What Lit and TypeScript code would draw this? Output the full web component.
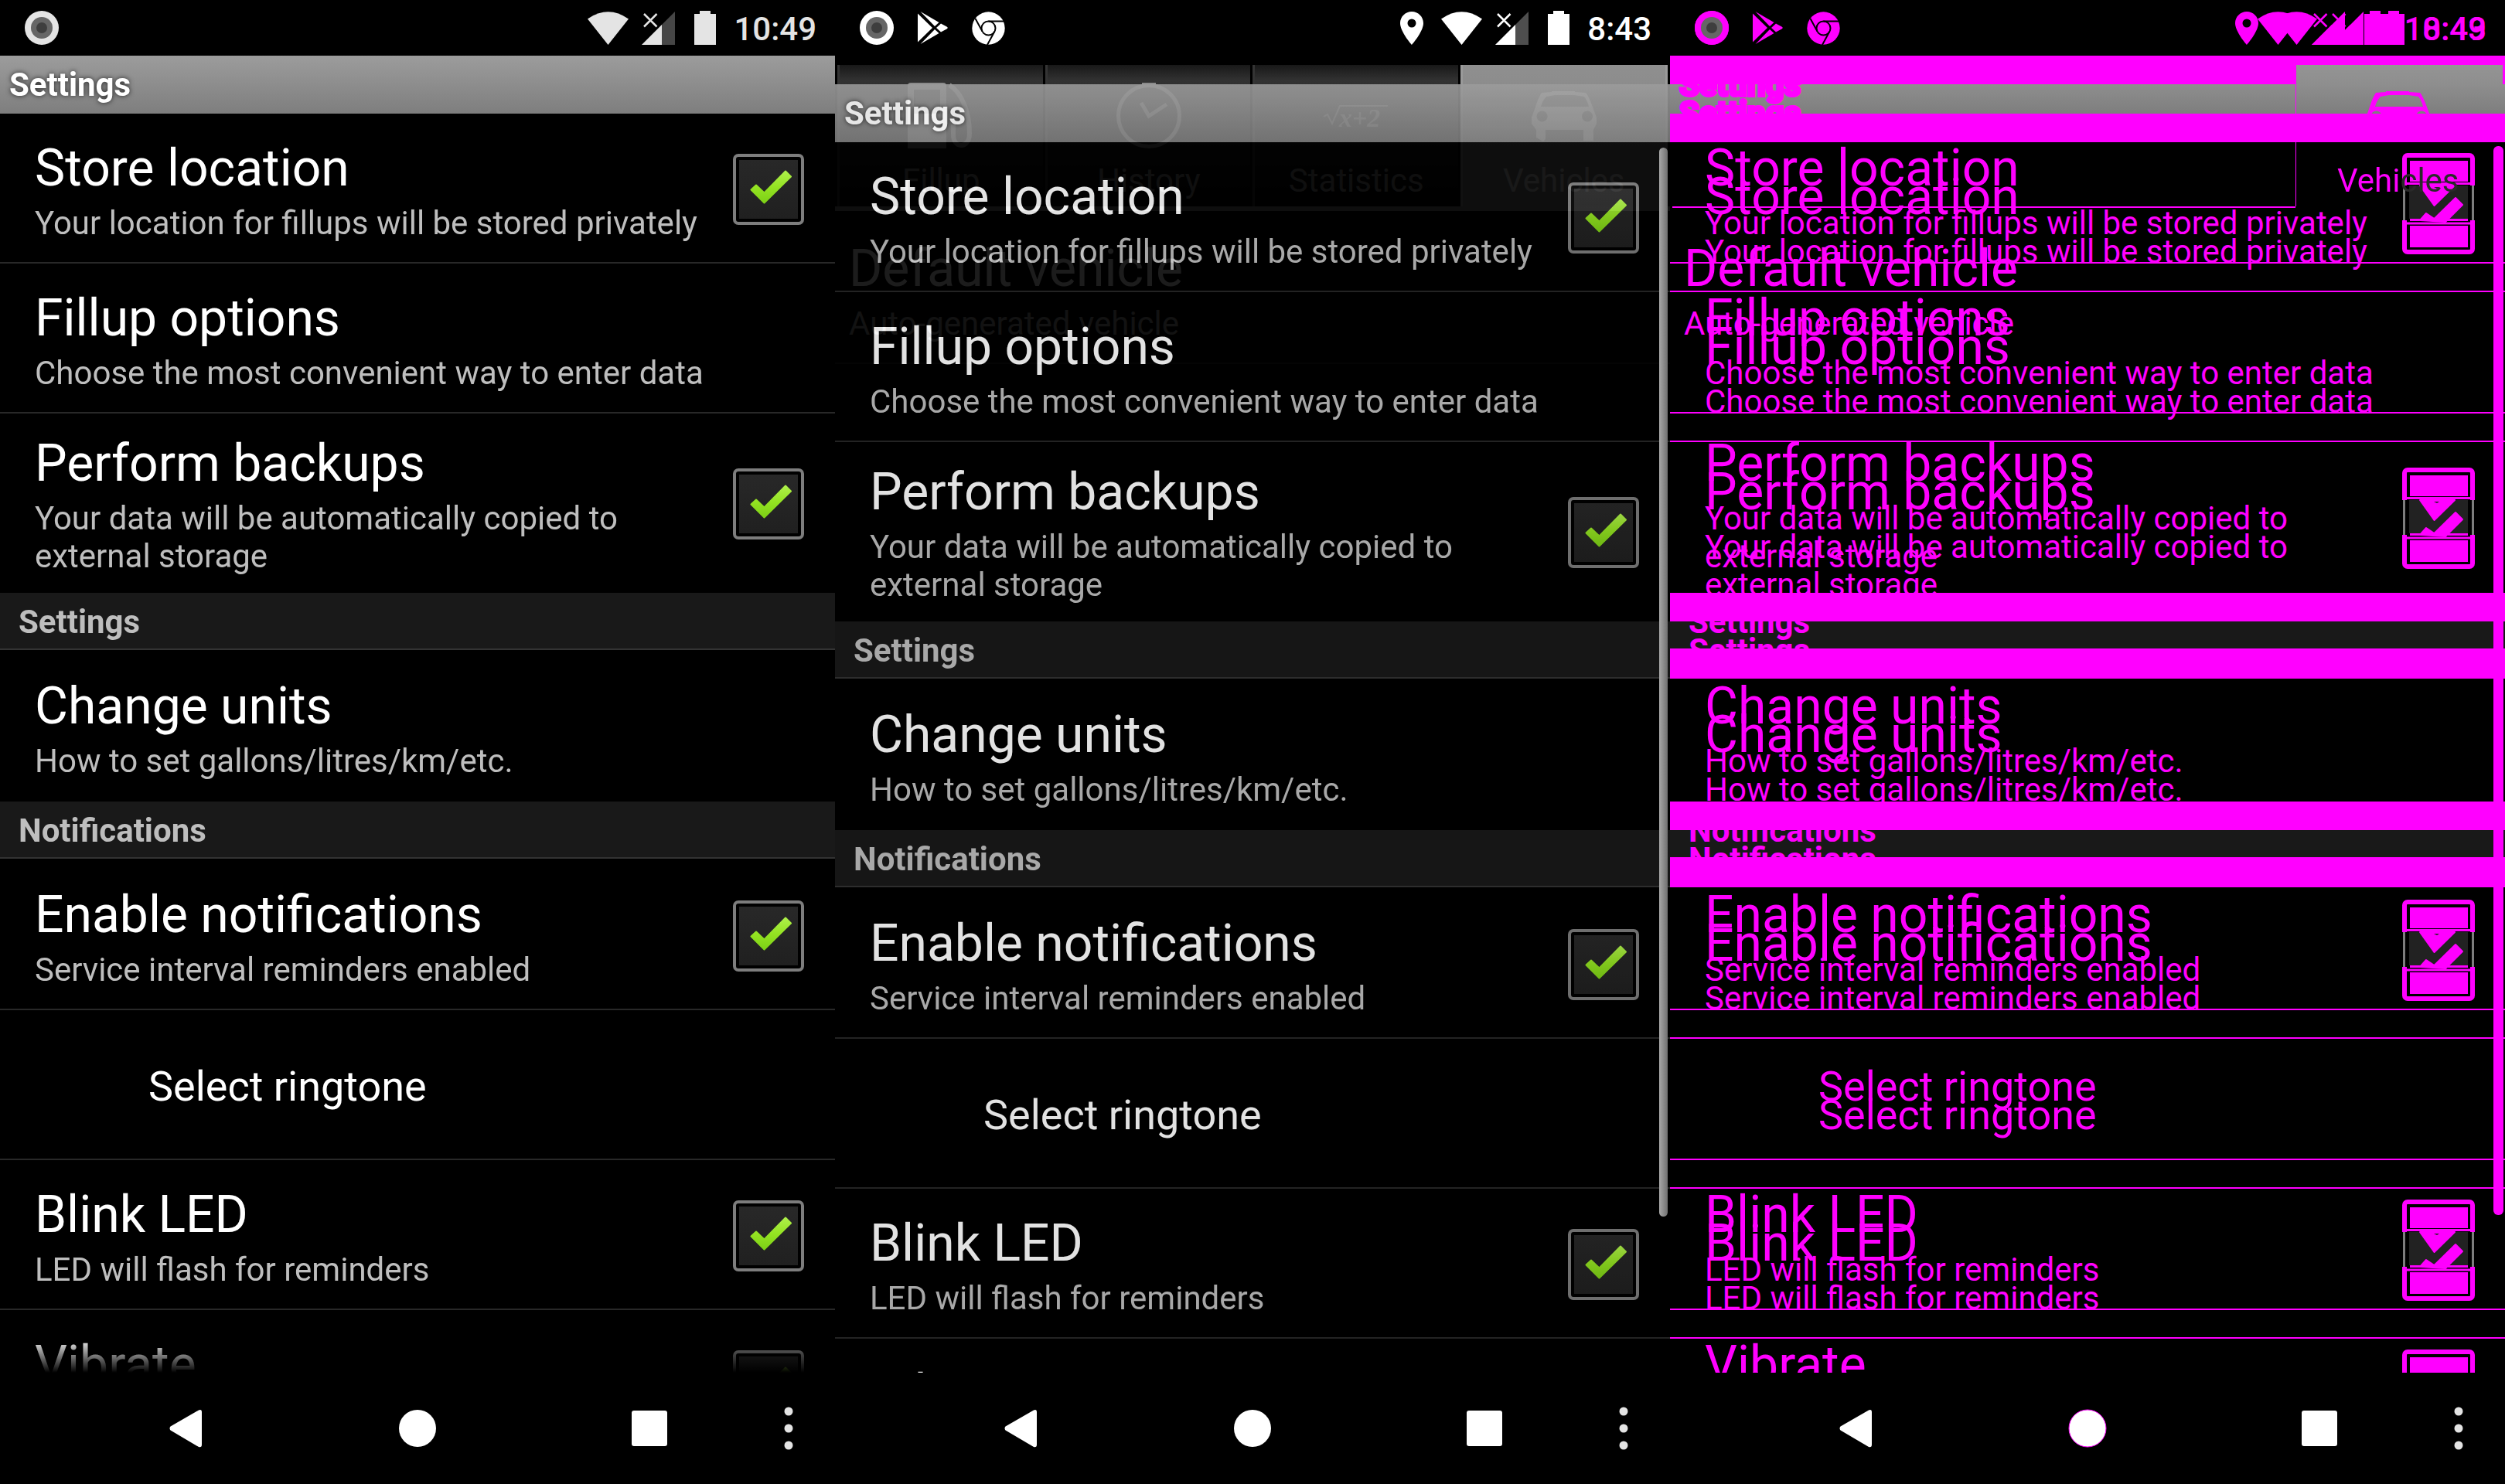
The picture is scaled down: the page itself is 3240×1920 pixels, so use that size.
import { LitElement, html, svg, css, nothing } from "lit";
import { customElement, property } from "lit/decorators.js";

type Tone = "live" | "diff-a" | "diff-b";

interface Item {
  kind: "category" | "toggle" | "link" | "plain";
  title: string;
  summary?: string;
}

const ITEMS: Item[] = [
  { kind: "toggle", title: "Store location", summary: "Your location for fillups will be stored privately" },
  { kind: "link", title: "Fillup options", summary: "Choose the most convenient way to enter data" },
  { kind: "toggle", title: "Perform backups", summary: "Your data will be automatically copied to external storage" },
  { kind: "category", title: "Settings" },
  { kind: "link", title: "Change units", summary: "How to set gallons/litres/km/etc." },
  { kind: "category", title: "Notifications" },
  { kind: "toggle", title: "Enable notifications", summary: "Service interval reminders enabled" },
  { kind: "plain", title: "Select ringtone" },
  { kind: "toggle", title: "Blink LED", summary: "LED will flash for reminders" },
  { kind: "toggle", title: "Vibrate" },
];

const base = css`
  * {
    box-sizing: border-box;
  }
  :host {
    display: block;
    font-family: Roboto, "Liberation Sans", sans-serif;
  }
  button {
    font: inherit;
    color: inherit;
    background: none;
    border: 0;
    padding: 0;
    margin: 0;
    text-align: left;
  }
  svg {
    display: block;
    overflow: visible;
  }
`;

/* ---------- status bar ---------- */

@customElement("status-bar")
export class StatusBar extends LitElement {
  @property() time = "";
  @property({ type: Boolean }) extras = false;
  @property({ type: Boolean }) pin = false;

  static styles = [
    base,
    css`
      :host {
        color: var(--status-color, #e4e4e4);
      }
      .bar {
        display: flex;
        align-items: center;
        height: 72px;
        padding: 0 24px 0 18px;
      }
      .note {
        width: 72px;
        display: grid;
        place-items: center;
      }
      .space {
        flex: 1;
      }
      .cell {
        width: 65px;
        display: grid;
        place-items: center;
      }
      .battery {
        width: 56px;
        margin-right: 9px;
      }
      .time {
        font-size: 42px;
        line-height: 68px;
        font-weight: 500;
        padding-top: 4px;
      }
      .dim {
        fill: var(--status-dim, #464646);
      }
    `,
  ];

  render() {
    return html`
      <div class="bar">
        <span class="note"
          ><svg width="44" height="44" viewBox="0 0 44 44" aria-hidden="true">
            <circle cx="22" cy="22" r="22" fill="currentColor" />
            <circle cx="22" cy="22" r="14" fill="#666" />
            <circle cx="22" cy="22" r="7" fill="#3e3e3e" /></svg
        ></span>
        ${this.extras
          ? html`<span class="note"
                ><svg width="39" height="42" viewBox="0 0 39 42" fill="currentColor" aria-hidden="true">
                  <path
                    d="M0 2.500 19 21 0 39.500ZM3.500 0 27.500 14 22 19ZM3.500 42 27.500 28 22 23ZM30 15.500 37.500 19.500Q40 21 37.500 22.500L30 26.500 24 21Z"
                  /></svg></span
              ><span class="note"
                ><svg width="43" height="43" viewBox="0 0 43 43" aria-hidden="true">
                  <circle cx="21.500" cy="21.500" r="21.200" fill="currentColor" />
                  <g fill="none" stroke="#000" stroke-width="2">
                    <circle cx="21.500" cy="21.500" r="9" />
                    <path d="M21.500 12.500H42M13.500 25.500 4.500 9M29.500 25.500 20 43" />
                  </g></svg
              ></span>`
          : nothing}
        <span class="space"></span>
        ${this.pin
          ? html`<span class="cell"
              ><svg width="30" height="43" viewBox="0 0 30 43" aria-hidden="true">
                <path
                  fill="currentColor"
                  fill-rule="evenodd"
                  d="M15 0C6.700 0 0 6.700 0 15c0 11 15 28 15 28s15-17 15-28C30 6.700 23.300 0 15 0zm0 20.500a5.500 5.500 0 1 1 0-11 5.500 5.500 0 0 1 0 11z"
                /></svg
            ></span>`
          : nothing}
        <span class="cell"
          ><svg width="53" height="43" viewBox="0 0 53 43" aria-hidden="true">
            <path fill="currentColor" d="M0 9.500Q26.500-9 53 9.500L26.500 43Z" /></svg
        ></span>
        <span class="cell"
          ><svg width="43" height="43" viewBox="0 0 43 43" aria-hidden="true">
            <path class="dim" d="M43 0V43H0Z" />
            <path fill="currentColor" d="M26 17V43H0Z" />
            <path d="M3 3 19.500 19.500M19.500 3 3 19.500" stroke="currentColor" stroke-width="2.500" /></svg
        ></span>
        <span class="cell battery"
          ><svg width="28" height="44" viewBox="0 0 28 44" aria-hidden="true">
            <path fill="currentColor" d="M0 4H7V0H21V4H28V44H0Z" /></svg
        ></span>
        <span class="time">${this.time}</span>
      </div>
    `;
  }
}

/* ---------- navigation bar ---------- */

@customElement("nav-bar")
export class NavBar extends LitElement {
  static styles = [
    base,
    css`
      .bar {
        display: grid;
        grid-template-columns: repeat(3, 1fr) 60px;
        height: 144px;
        padding: 0 30px 0 90px;
      }
      button {
        display: grid;
        place-items: center;
      }
      .home {
        stroke: var(--home-ring, none);
        stroke-width: 1;
      }
    `,
  ];

  render() {
    return html`
      <nav class="bar">
        <button aria-label="Back">
          <svg width="42" height="50" viewBox="0 0 42 50">
            <path d="M38 1.500 1.500 22.500Q-.5 25 1.500 27.500L38 49Q42 50 42 46V4Q42 0 38 1.500Z" fill="#fff" />
          </svg>
        </button>
        <button aria-label="Home">
          <svg width="48" height="48" viewBox="0 0 48 48">
            <circle class="home" cx="24" cy="24" r="24" fill="#fff" />
          </svg>
        </button>
        <button aria-label="Recent apps">
          <svg width="46" height="46" viewBox="0 0 46 46"><rect width="46" height="46" rx="3" fill="#fff" /></svg>
        </button>
        <button aria-label="More">
          <svg width="12" height="56" viewBox="0 0 12 56" fill="#e4e4e4">
            <circle cx="6" cy="6" r="5.500" />
            <circle cx="6" cy="28" r="5.500" />
            <circle cx="6" cy="50" r="5.500" />
          </svg>
        </button>
      </nav>
    `;
  }
}

/* ---------- settings page ---------- */

const CHECK = "M23.500 46.500 30 40.500 40.500 50.500 68 22.500 75 29.500 40.500 63.500Z";

const liveBox = () => svg`
  <svg class="box" width="92" height="92" viewBox="0 0 92 92" aria-hidden="true">
    <defs>
      <linearGradient id="green" x1="0" y1="0" x2="0" y2="1">
        <stop offset="0" stop-color="#aef04a" />
        <stop offset=".5" stop-color="#94e322" />
        <stop offset="1" stop-color="#7dd016" />
      </linearGradient>
      <linearGradient id="well" x1="0" y1="0" x2="0" y2="1">
        <stop offset="0" stop-color="#282828" />
        <stop offset="1" stop-color="#202020" />
      </linearGradient>
    </defs>
    <rect x="2" y="2" width="88" height="88" rx="5" fill="#000" stroke="#7d7d7d" stroke-width="4" />
    <rect x="8" y="8" width="76" height="76" fill="url(#well)" />
    <path class="mark" d=${CHECK} fill="url(#green)" stroke="url(#green)" stroke-width="2" stroke-linejoin="round" />
  </svg>`;

/* Changed pixels of a box that moved down by 37px. */
const diffBox = () => svg`
  <svg class="box" width="92" height="92" viewBox="0 0 92 92" aria-hidden="true">
    <rect x="2" y="2" width="88" height="125" rx="4" fill="#000" stroke="#f0f" stroke-width="6" />
    <rect x="9" y="9" width="75" height="27" fill="#f0f" />
    <rect x="9" y="93" width="75" height="28" fill="#f0f" />
    <rect x="-1" y="41" width="94" height="45" fill="#000" />
    <path d="M1.500 41V86M90.500 41V86" stroke="#7d7d7d" stroke-width="3" />
    <rect x="8" y="41" width="76" height="43" fill="#222" />
    <path d="M5 38.500H87M9 85.500H84M3 90H89" stroke="#f0f" stroke-width="3" />
    <path d="M22 41H67L40.500 67ZM22 86 30 77 40.500 84 68 57 77 66 55 88Z" fill="#f0f" stroke="#f0f" stroke-width="2" stroke-linejoin="round" />
    <path d="M40 43H47L44 45Z" fill="#222" />
  </svg>`;

@customElement("settings-page")
export class SettingsPage extends LitElement {
  @property({ reflect: true }) tone: Tone = "live";

  static styles = [
    base,
    css`
      :host {
        --title: #fff;
        --summary: #bebebe;
        --line: #282828;
        color: var(--title);
      }
      :host([tone^="diff"]) {
        --title: #f0f;
        --summary: #f0f;
        --line: #f0f;
      }
      h1,
      h2,
      ul {
        margin: 0;
        padding: 0;
        list-style: none;
      }
      h1 {
        font-size: 42px;
        line-height: 75px;
        padding-left: 12px;
        background: linear-gradient(#9c9c9c, #7e7e7e);
        text-shadow: 0 0 6px rgba(0, 0, 0, 0.75);
      }
      h2 {
        font-size: 42px;
        line-height: 69px;
        padding: 3px 0 0 24px;
        color: var(--summary);
        background: #191919;
        border-bottom: 2px solid #333;
        margin-bottom: 2px;
      }
      :host([tone^="diff"]) h1 {
        text-shadow: none;
        -webkit-text-stroke: 4px #f0f;
      }
      :host([tone="diff-a"]) h1 {
        background: linear-gradient(#f0f 37px, #8e8e8e 37px, #7e7e7e);
      }
      :host([tone="diff-b"]) h1 {
        background: linear-gradient(transparent 38px, #f0f 38px);
      }
      :host([tone="diff-a"]) h2 {
        background: linear-gradient(#f0f 37px, #191919 37px);
        border-color: #f0f;
      }
      :host([tone="diff-b"]) h2 {
        background: linear-gradient(transparent 35px, #f0f 35px);
        border-color: #f0f;
      }
      .item {
        border-bottom: 2px solid var(--line);
      }
      .item.last {
        border-color: transparent;
      }
      .row {
        display: flex;
        align-items: center;
        width: 100%;
        min-height: 192px;
        padding: 0 40px 0 45px;
      }
      .words {
        flex: 1;
        display: flex;
        flex-direction: column;
        gap: 8px;
        padding: 26px 0 21px;
      }
      .title {
        font-size: 66px;
        line-height: 77px;
      }
      .summary {
        font-size: 42px;
        line-height: 49px;
        min-height: 49px;
        color: var(--summary);
      }
      .plain {
        padding: 4px 40px 0 192px;
        font-size: 54px;
        line-height: 63px;
      }
      .slot {
        display: grid;
        margin-top: 3px;
      }
      .slot > * {
        grid-area: 1 / 1;
      }
      input {
        appearance: none;
        width: 92px;
        height: 92px;
        margin: 0;
      }
      .box {
        pointer-events: none;
      }
      input:not(:checked) + .box .mark {
        display: none;
      }
    `,
  ];

  private words(item: Item) {
    return html`<span class="words"
      ><span class="title">${item.title}</span><span class="summary">${item.summary ?? nothing}</span></span
    >`;
  }

  private row(item: Item) {
    if (item.kind === "plain") return html`<button class="row plain">${item.title}</button>`;
    if (item.kind === "link") return html`<button class="row">${this.words(item)}</button>`;
    return html`<label class="row">
      ${this.words(item)}
      <span class="slot">
        <input type="checkbox" checked />
        ${this.tone === "live" ? liveBox() : this.tone === "diff-a" ? diffBox() : nothing}
      </span>
    </label>`;
  }

  render() {
    return html`
      <h1>Settings</h1>
      <ul>
        ${ITEMS.map((item, i) =>
          item.kind === "category"
            ? html`<li><h2>${item.title}</h2></li>`
            : html`<li class="item ${ITEMS[i + 1]?.kind === "category" ? "last" : ""}">${this.row(item)}</li>`,
        )}
      </ul>
    `;
  }
}

/* ---------- vehicles page, the one behind ---------- */

const fuel = svg`<path fill-rule="evenodd" d="M0 4Q0 0 4 0H46Q50 0 50 4V85H0ZM8 9V40H42V9Z" />
  <path d="M54 3C72 14 80 42 80 66C80 86 58 86 59 66V54" fill="none" stroke="currentColor" stroke-width="6" />`;
const clock = svg`<g fill="none" stroke="currentColor"><circle cx="43" cy="43" r="39.500" stroke-width="5" />
  <path d="M33 26 43 43 66 28" stroke-width="5" /></g><path d="M34 0H52V5H34Z" />`;
const root = svg`<g opacity=".8"><path d="M1 44 6 41 12 53 22 30H84" fill="none" stroke="currentColor" stroke-width="2" />
  <text x="21" y="57" font-family="Liberation Serif, serif" font-size="34" font-style="italic" font-weight="700">x+2</text></g>`;
const car = svg`<path fill-rule="evenodd" d="M14 13 27 12V11H57V12L71 13Q75 17 82 37L85 45V53L81 61V75H68V61H19V73L16 76 7 71V61L1 53V45L4 37Q10 18 14 13ZM20 18Q15 23 13 31H75Q73 23 69 18L56 16H31ZM14.500 36.500a7 7 0 1 0 .1 0ZM73 36.500a7 7 0 1 0 .1 0Z" />`;

const TABS = [
  { label: "Fillup", icon: fuel },
  { label: "History", icon: clock },
  { label: "Statistics", icon: root },
  { label: "Vehicles", icon: car },
];

@customElement("vehicles-page")
export class VehiclesPage extends LitElement {
  @property({ reflect: true }) tone: Tone = "live";

  static styles = [
    base,
    css`
      :host {
        color: #fff;
      }
      :host([tone^="diff"]) {
        color: #f0f;
      }
      .tabs {
        display: grid;
        grid-template-columns: repeat(4, 1fr);
        padding: 0 3px;
        border-bottom: 6px solid #7f7f7f;
      }
      .tab {
        display: flex;
        flex-direction: column;
        align-items: center;
        gap: 16px;
        height: 183px;
        padding-top: 23px;
        font-size: 42px;
        line-height: 49px;
        color: #8c8c8c;
        background: linear-gradient(#181818, #323232 20px, #262626 70px, #000);
        border-left: 3px solid #343434;
        border-right: 3px solid #000;
      }
      .tab.on {
        color: #e4e4e4;
        background: linear-gradient(#8f8f8f, #7c7c7c);
        border-color: #9a9a9a;
      }
      .row {
        display: flex;
        flex-direction: column;
        gap: 8px;
        padding: 36px 18px 26px;
        border-bottom: 2px solid #282828;
      }
      .title {
        font-size: 66px;
        line-height: 77px;
      }
      .summary {
        font-size: 42px;
        line-height: 49px;
        color: #a0a0a0;
      }
      :host([tone^="diff"]) .tabs {
        border-color: transparent;
      }
      :host([tone^="diff"]) .tab {
        color: #f0f;
        background: none;
        border-color: transparent;
        box-shadow: 0 2px #f0f;
      }
      :host([tone^="diff"]) .tab.on {
        background: linear-gradient(#949494, #8e8e8e 25px, transparent 25px);
        border-left: 1px solid #f0f;
        box-shadow: none;
      }
      :host([tone^="diff"]) .on .label {
        background: linear-gradient(90deg, #f0f 52%, #2a2a2a 52%);
        background-clip: text;
        color: transparent;
      }
      :host([tone^="diff"]) .row {
        border-color: transparent;
      }
      :host([tone^="diff"]) .summary {
        color: #f0f;
      }
    `,
  ];

  render() {
    const diff = this.tone !== "live";
    return html`
      <div class="tabs" role="tablist">
        ${TABS.map((tab, i) => {
          const on = i === 3;
          return html`<button class="tab ${on ? "on" : ""}" role="tab" aria-label=${tab.label} aria-selected=${on}>
            ${diff && !on
              ? nothing
              : html`<svg width="86" height="86" viewBox="0 0 86 86" fill="currentColor" aria-hidden="true">
                    ${tab.icon}
                  </svg>
                  <span class="label">${tab.label}</span>`}
          </button>`;
        })}
      </div>
      <div class="row">
        <span class="title">Default vehicle</span>
        <span class="summary">Auto-generated vehicle</span>
      </div>
    `;
  }
}

/* ---------- page ---------- */

@customElement("app-root")
export class AppRoot extends LitElement {
  static styles = [
    base,
    css`
      :host {
        background: #000;
      }
      .page {
        display: grid;
        grid-template-columns: repeat(3, minmax(0, 1fr));
        height: 100vh;
      }
      .screen {
        display: grid;
        grid-template-rows: auto minmax(0, 1fr) auto;
        min-height: 0;
        background: #000;
      }
      .bars,
      .stage {
        display: grid;
        grid-template-columns: minmax(0, 1fr);
      }
      .bars > *,
      .stage > * {
        grid-area: 1 / 1;
        min-width: 0;
        min-height: 0;
      }
      .stage {
        grid-template-rows: minmax(0, 1fr);
        overflow: hidden;
      }
      .fade {
        overflow: hidden;
        mask-image: linear-gradient(#000 calc(100% - 46px), transparent);
      }
      .bright {
        --status-color: #fff;
        --status-dim: #4e4e4e;
      }
      .changed {
        --status-color: #f0f;
        --status-dim: #f0f;
        --home-ring: #f0f;
      }
      .behind {
        margin-top: 12px;
      }
      .sliding {
        margin-top: 37px;
      }
      .glass {
        background: #000;
        opacity: 0.885;
      }
      .scroll {
        z-index: 1;
        justify-self: end;
        width: 11px;
        height: 1383px;
        margin: 119px 3px 0 0;
        border-radius: 6px;
        background: linear-gradient(90deg, #a8a8a8, #707070);
      }
      .changed .scroll {
        width: 13px;
        margin: 117px 2px 0 0;
        background: #f0f;
      }
    `,
  ];

  render() {
    return html`
      <main class="page">
        <section class="screen">
          <status-bar time="10:49"></status-bar>
          <div class="stage"><settings-page class="fade"></settings-page></div>
          <nav-bar></nav-bar>
        </section>

        <section class="screen bright">
          <status-bar time="8:43" extras pin></status-bar>
          <div class="stage">
            <vehicles-page class="behind"></vehicles-page>
            <settings-page class="sliding glass"></settings-page>
            <div class="scroll"></div>
          </div>
          <nav-bar></nav-bar>
        </section>

        <section class="screen changed">
          <div class="bars">
            <status-bar time="10:49"></status-bar>
            <status-bar time="8:43" extras pin></status-bar>
          </div>
          <div class="stage">
            <settings-page tone="diff-a"></settings-page>
            <vehicles-page class="behind" tone="diff-a"></vehicles-page>
            <settings-page class="sliding" tone="diff-b"></settings-page>
            <div class="scroll"></div>
          </div>
          <nav-bar></nav-bar>
        </section>
      </main>
    `;
  }
}
